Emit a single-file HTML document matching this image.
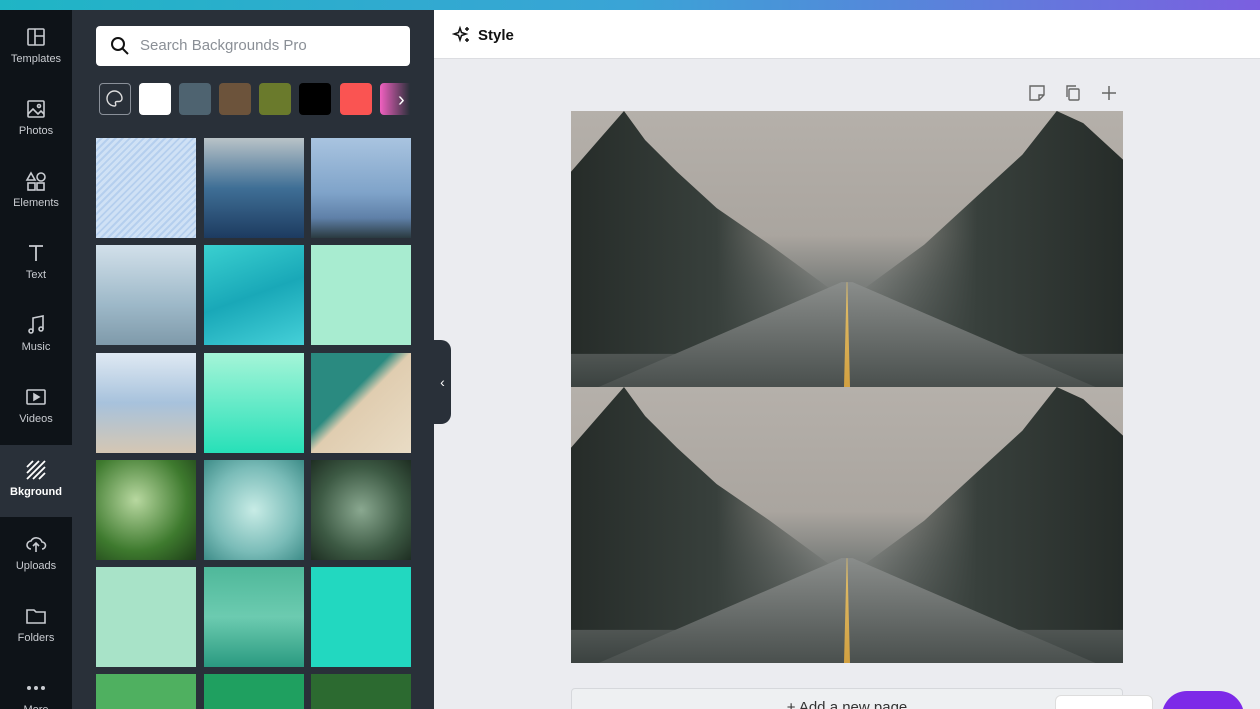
<!DOCTYPE html>
<html><head><meta charset="utf-8"><style>
*{box-sizing:border-box;margin:0;padding:0}
html{width:1260px;height:709px;overflow:hidden}
body{width:1260px;height:709px;overflow:hidden;background:#ebecf0;font-family:"Liberation Sans",sans-serif;position:relative}
.top{position:absolute;left:0;top:0;width:1260px;height:10px;background:linear-gradient(90deg,#1fb5c5,#3aa4d6 50%,#7b5fe0)}
.side{position:absolute;left:0;top:10px;width:72px;height:699px;background:#0e1318;overflow:hidden}
.item{position:absolute;left:0;width:72px;height:72px;color:#c9ccd1;font-size:11px;text-align:center}
.item svg{display:block;margin:16px auto 5px;width:22px;height:22px}
.act{background:#293039;color:#fff;font-weight:bold}
.act svg{margin-top:14px}
.panel{position:absolute;left:72px;top:10px;width:362px;height:699px;background:#293039;overflow:hidden}
.search{position:absolute;left:24px;top:16px;width:314px;height:40px;background:#fff;border-radius:4px;color:#8a8f96;font-size:15px;line-height:40px;padding-left:44px}
.sw{position:absolute;top:73px;width:32px;height:32px;border-radius:4px}
.t{position:absolute;width:100px;height:100px}
.hdr{position:absolute;left:434px;top:10px;width:826px;height:49px;background:#fff;border-bottom:1px solid #dcdde1}
.photo{position:absolute;left:571px;width:552px;height:276px;overflow:hidden;background:linear-gradient(180deg,#b5b0aa 0%,#aaa59f 45%,#7d807d 62%,#3b4240 100%)}
.tl{position:absolute;left:0;top:0;width:48%;height:88%;background:linear-gradient(90deg,#262c29,#38403c 55%,rgba(80,88,85,0));clip-path:polygon(0 25%,12% 10%,20% 0,28% 12%,40% 25%,55% 40%,75% 55%,100% 75%,100% 100%,0 100%)}
.tr{position:absolute;right:0;top:0;width:48%;height:88%;background:linear-gradient(270deg,#262c29,#38403c 55%,rgba(80,88,85,0));clip-path:polygon(100% 20%,85% 5%,75% 0,62% 18%,45% 35%,25% 55%,0 75%,0 100%,100% 100%)}
.road{position:absolute;left:0;bottom:0;width:100%;height:38%;background:linear-gradient(180deg,#8a8d8b,#4a504e);clip-path:polygon(49% 0,51% 0,95% 100%,5% 100%)}
.yl{position:absolute;left:50%;bottom:0;width:6px;margin-left:-3px;height:38%;background:linear-gradient(#e0c070,#d2a040);clip-path:polygon(45% 0,55% 0,100% 100%,0 100%)}
</style></head><body>
<div class="top"></div>
<div class="side">
<div class="item" style="top:0"><svg viewBox="0 0 22 22" fill="none" stroke="#c9ccd1" stroke-width="1.6"><rect x="3" y="3" width="16" height="16" rx="1"/><path d="M10 3v16M10 10h9"/></svg>Templates</div>
<div class="item" style="top:72px"><svg viewBox="0 0 22 22" fill="none" stroke="#c9ccd1" stroke-width="1.6"><rect x="3" y="3" width="16" height="16" rx="1"/><path d="M3 16l5-5 5 5 3-3 3 3"/><circle cx="14" cy="8" r="1.5"/></svg>Photos</div>
<div class="item" style="top:144px"><svg viewBox="0 0 22 22" fill="none" stroke="#c9ccd1" stroke-width="1.6"><path d="M6 3l4 7H2z"/><circle cx="16" cy="7" r="4"/><rect x="3" y="13" width="7" height="7"/><rect x="12" y="13" width="7" height="7"/></svg>Elements</div>
<div class="item" style="top:216px"><svg viewBox="0 0 22 22" fill="none" stroke="#c9ccd1" stroke-width="1.8"><path d="M4 4h14M11 4v15"/></svg>Text</div>
<div class="item" style="top:288px"><svg viewBox="0 0 22 22" fill="none" stroke="#c9ccd1" stroke-width="1.6"><path d="M8 17V4l10-2v13"/><circle cx="6" cy="17" r="2"/><circle cx="16" cy="15" r="2"/></svg>Music</div>
<div class="item" style="top:360px"><svg viewBox="0 0 22 22" fill="none" stroke="#c9ccd1" stroke-width="1.6"><rect x="2" y="4" width="18" height="14" rx="1"/><path d="M9 8l5 3-5 3z" fill="#c9ccd1"/></svg>Videos</div>
<div class="item act" style="top:435px"><svg viewBox="0 0 22 22" fill="none" stroke="#fff" stroke-width="1.8"><path d="M2 8l6-6M2 14L14 2M2 20L20 2M8 20L20 8M14 20l6-6"/></svg>Bkground</div>
<div class="item" style="top:507px"><svg viewBox="0 0 22 22" fill="none" stroke="#c9ccd1" stroke-width="1.6"><path d="M6 16a4 4 0 010-8 6 6 0 0111 1 3.5 3.5 0 010 7M11 19v-8M8 13l3-3 3 3"/></svg>Uploads</div>
<div class="item" style="top:579px"><svg viewBox="0 0 22 22" fill="none" stroke="#c9ccd1" stroke-width="1.6"><path d="M2 5h7l2 2h9v11H2z"/></svg>Folders</div>
<div class="item" style="top:651px"><svg viewBox="0 0 22 22"><circle cx="4" cy="11" r="2" fill="#c9ccd1"/><circle cx="11" cy="11" r="2" fill="#c9ccd1"/><circle cx="18" cy="11" r="2" fill="#c9ccd1"/></svg>More</div>
</div>
<div class="panel">
<div class="search"><svg style="position:absolute;left:14px;top:10px" width="20" height="20" viewBox="0 0 20 20" fill="none" stroke="#111" stroke-width="2"><circle cx="8" cy="8" r="6"/><path d="M12.5 12.5L18 18"/></svg>Search Backgrounds Pro</div>
<div class="sw" style="left:27px;border:1.5px solid #8a9099"><svg width="29" height="29" viewBox="0 0 29 29" fill="none" stroke="#ddd" stroke-width="1.4"><path d="M14.5 7a7.5 7.5 0 100 15c1.5 0 1.5-1.5 1-2.5s0-2 1.5-2h2a3 3 0 003-3c0-4-3.5-7.5-7.5-7.5z"/></svg></div>
<div class="sw" style="left:67px;background:#fff"></div>
<div class="sw" style="left:107px;background:#4e6370"></div>
<div class="sw" style="left:147px;background:#6c533b"></div>
<div class="sw" style="left:187px;background:#6a7a2c"></div>
<div class="sw" style="left:227px;background:#000"></div>
<div class="sw" style="left:268px;background:#fa5452"></div>
<div class="sw" style="left:308px;width:30px;background:linear-gradient(90deg,#f060c0,#293039);border-radius:4px 0 0 4px"></div>
<div style="position:absolute;left:326px;top:79px;color:#fff;font-size:20px">›</div>
<div class="t" style="left:24px;top:128px;background:repeating-linear-gradient(135deg,#cfe1f5 0 3px,#b5cfee 3px 5px)"></div>
<div class="t" style="left:132px;top:128px;background:linear-gradient(180deg,#b9c3c8,#3f6f96 50%,#1d3b60)"></div>
<div class="t" style="left:239px;top:128px;background:linear-gradient(180deg,#a9c4e0,#7fa3c9 55%,#5f80a8 80%,#2a3a40)"></div>
<div class="t" style="left:24px;top:235px;background:linear-gradient(180deg,#d2e0ea,#9db8c8 60%,#7f9aaa)"></div>
<div class="t" style="left:132px;top:235px;background:linear-gradient(160deg,#3ad0d0,#19a8b8 50%,#45d0d8)"></div>
<div class="t" style="left:239px;top:235px;background:#a8ecd0"></div>
<div class="t" style="left:24px;top:343px;background:linear-gradient(180deg,#dfe9f3,#a7c2dc 50%,#d5c7b3)"></div>
<div class="t" style="left:132px;top:343px;background:linear-gradient(180deg,#a5f5d8,#27e0b8)"></div>
<div class="t" style="left:239px;top:343px;background:linear-gradient(135deg,#2a8a80 40%,#e0cdb0 50%,#e9dcc5)"></div>
<div class="t" style="left:24px;top:450px;background:radial-gradient(circle at 40% 40%,#b8d8a0,#3e7a2e 60%,#1d3d18)"></div>
<div class="t" style="left:132px;top:450px;background:radial-gradient(circle,#c8ece6,#7abcb8 60%,#3d8c88)"></div>
<div class="t" style="left:239px;top:450px;background:radial-gradient(circle,#8aa890,#3d5a44 60%,#1e2e22)"></div>
<div class="t" style="left:24px;top:557px;background:#a8e3c8"></div>
<div class="t" style="left:132px;top:557px;background:linear-gradient(180deg,#4fb89a,#6ccbb0 50%,#2a9a80)"></div>
<div class="t" style="left:239px;top:557px;background:#22d8c0"></div>
<div class="t" style="left:24px;top:664px;background:#4fb060"></div>
<div class="t" style="left:132px;top:664px;background:#1fa060"></div>
<div class="t" style="left:239px;top:664px;background:#2c6a30"></div>
</div>
<div style="position:absolute;left:434px;top:340px;width:17px;height:84px;background:#293039;border-radius:0 10px 10px 0;color:#fff;font-size:14px;line-height:84px;text-align:center">‹</div>
<div class="hdr"><svg style="position:absolute;left:18px;top:15px" width="20" height="20" viewBox="0 0 20 20" fill="none" stroke="#111" stroke-width="1.5"><path d="M8 3l1.5 4.5L14 9l-4.5 1.5L8 15l-1.5-4.5L2 9l4.5-1.5z"/><path d="M15 2v4M13 4h4M15 13v4M13 15h4"/></svg><span style="position:absolute;left:44px;top:17px;font-size:15px;font-weight:bold;color:#111">Style</span></div>
<svg style="position:absolute;left:1028px;top:84px" width="18" height="18" viewBox="0 0 18 18" fill="none" stroke="#666" stroke-width="1.4"><path d="M2 2h14v9l-5 5H2z M11 16v-5h5"/></svg>
<svg style="position:absolute;left:1064px;top:84px" width="18" height="18" viewBox="0 0 18 18" fill="none" stroke="#666" stroke-width="1.4"><rect x="5" y="5" width="10" height="11" rx="1"/><path d="M3 13V2h9"/></svg>
<svg style="position:absolute;left:1100px;top:84px" width="18" height="18" viewBox="0 0 18 18" fill="none" stroke="#666" stroke-width="1.5"><path d="M9 2v14M2 9h14"/></svg>
<div class="photo" style="top:111px"><div class="tl"></div><div class="tr"></div><div class="road"></div><div class="yl"></div></div>
<div class="photo" style="top:387px"><div class="tl"></div><div class="tr"></div><div class="road"></div><div class="yl"></div></div>
<div style="position:absolute;left:571px;top:688px;width:552px;height:40px;border:1px solid #d6d8dc;border-radius:4px;background:#eef0f2;text-align:center;font-size:15px;color:#333;padding-top:10px">+ Add a new page</div>
<div style="position:absolute;left:1055px;top:695px;width:98px;height:30px;background:#fff;border:1px solid #ddd;border-radius:6px"></div>
<div style="position:absolute;left:1162px;top:691px;width:82px;height:50px;background:#7d2ae8;border-radius:25px"></div>
</body></html>
